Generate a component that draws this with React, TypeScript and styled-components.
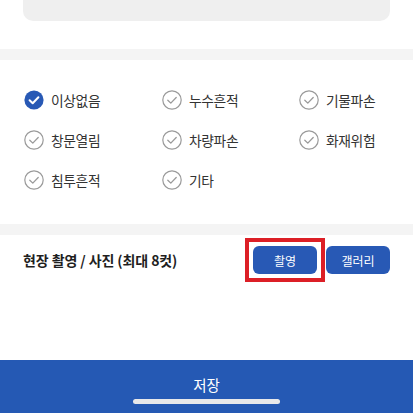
import React from 'react';
import styled, { createGlobalStyle } from 'styled-components';

const GlobalStyle = createGlobalStyle`
  html, body {
    margin: 0;
    padding: 0;
    background: #ffffff;
  }
  body {
    font-family: "Noto Sans CJK KR", "Noto Sans", sans-serif;
  }
`;

const Page = styled.div`
  display: flex;
  flex-direction: column;
  height: 413px;
  overflow: hidden;
  background: #ffffff;
`;

const MemoCard = styled.div`
  margin: 0 23px;
  height: 21px;
  background: #efefef;
  border-radius: 0 0 10px 10px;
`;

const SectionDivider = styled.div<{ $top?: number }>`
  margin-top: ${({ $top }) => $top ?? 0}px;
  height: 11px;
  background: #f4f4f4;
`;

const CheckGrid = styled.div`
  display: grid;
  grid-template-columns: 138px 137px 1fr;
  grid-auto-rows: 40px;
  padding: 20px 0 24px 24px;
`;

const CheckItem = styled.label`
  display: flex;
  align-items: center;
  gap: 7px;
  font-size: 13.8px;
  letter-spacing: -0.4px;
  color: #333333;
`;

const PhotoRow = styled.div`
  display: flex;
  align-items: center;
  justify-content: space-between;
  padding: 11px 23px 0 23px;
`;

const PhotoTitle = styled.span`
  font-size: 14px;
  font-weight: 700;
  color: #1f1f1f;
  letter-spacing: -0.1px;
`;

const ButtonGroup = styled.div`
  display: flex;
  gap: 9px;
`;

const ActionButton = styled.button<{ $marked?: boolean }>`
  position: relative;
  width: 64px;
  height: 28px;
  border: none;
  border-radius: 6px;
  background: #2859b5;
  color: #ffffff;
  font-family: "Noto Sans CJK KR", sans-serif;
  font-size: 12px;
  padding: 0;

  ${({ $marked }) =>
    $marked &&
    `
    &::after {
      content: '';
      position: absolute;
      inset: -8px;
      border: 4px solid #dc1f26;
    }
  `}
`;

const Footer = styled.div`
  margin-top: auto;
  height: 53px;
  background: #2559b4;
  display: flex;
  flex-direction: column;
  align-items: center;
  padding-top: 15px;
  box-sizing: border-box;
`;

const SaveText = styled.span`
  color: #ffffff;
  font-size: 14.5px;
  line-height: 20px;
`;

const HomeIndicator = styled.div`
  margin-top: 4px;
  width: 147px;
  height: 5px;
  border-radius: 3px;
  background: #e8e8ea;
`;

const CheckIcon: React.FC<{ checked: boolean }> = ({ checked }) =>
  checked ? (
    <svg width="20" height="20" viewBox="0 0 20 20">
      <circle cx="10" cy="10" r="9.6" fill="#2859b5" />
      <path d="M5.6 10.2 L8.7 13.2 L14.4 7.3" fill="none" stroke="#ffffff" strokeWidth="2" strokeLinecap="round" strokeLinejoin="round" />
    </svg>
  ) : (
    <svg width="20" height="20" viewBox="0 0 20 20">
      <circle cx="10" cy="10" r="9.2" fill="none" stroke="#9a9a9a" strokeWidth="1.2" />
      <path d="M5.8 10.2 L8.8 13.1 L14.2 7.5" fill="none" stroke="#9a9a9a" strokeWidth="1.3" strokeLinecap="round" strokeLinejoin="round" />
    </svg>
  );

const items = [
  { label: '이상없음', checked: true },
  { label: '누수흔적', checked: false },
  { label: '기물파손', checked: false },
  { label: '창문열림', checked: false },
  { label: '차량파손', checked: false },
  { label: '화재위험', checked: false },
  { label: '침투흔적', checked: false },
  { label: '기타', checked: false },
];

export default function App() {
  return (
    <Page>
      <GlobalStyle />
      <MemoCard />
      <SectionDivider $top={28} />
      <CheckGrid>
        {items.map((item) => (
          <CheckItem key={item.label}>
            <CheckIcon checked={item.checked} />
            {item.label}
          </CheckItem>
        ))}
      </CheckGrid>
      <SectionDivider />
      <PhotoRow>
        <PhotoTitle>현장 촬영 / 사진 (최대 8컷)</PhotoTitle>
        <ButtonGroup>
          <ActionButton $marked>촬영</ActionButton>
          <ActionButton>갤러리</ActionButton>
        </ButtonGroup>
      </PhotoRow>
      <Footer>
        <SaveText>저장</SaveText>
        <HomeIndicator />
      </Footer>
    </Page>
  );
}
